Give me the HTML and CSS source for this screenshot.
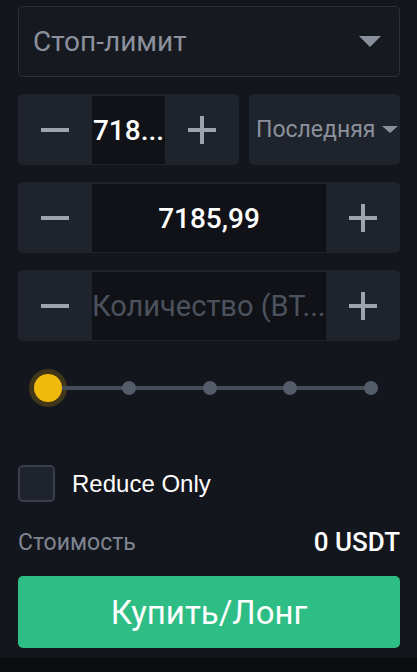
FILE: index.html
```html
<!DOCTYPE html>
<html lang="ru">
<head>
  <meta charset="UTF-8" />
  <meta name="viewport" content="width=device-width, initial-scale=1.0"/>
  <title>Стоп-лимит</title>
  <link rel="stylesheet" href="styles.css">
</head>
<body>
  <div class="panel">
    <div class="select">
      <span>Стоп-лимит</span>
      <span class="caret"></span>
    </div>

    <div class="row">
      <div class="stepper short">
        <button class="step minus"></button>
        <div class="field value">718...</div>
        <button class="step plus"></button>
      </div>
      <div class="trigger">
        <span>Последняя</span>
        <span class="caret small"></span>
      </div>
    </div>

    <div class="stepper">
      <button class="step minus"></button>
      <div class="field value">7185,99</div>
      <button class="step plus"></button>
    </div>

    <div class="stepper">
      <button class="step minus"></button>
      <div class="field placeholder">Количество (BT...</div>
      <button class="step plus"></button>
    </div>

    <div class="slider">
      <div class="stop first"><span class="knob"></span></div>
      <div class="track"></div>
      <div class="stop"><span class="dot"></span></div>
      <div class="track"></div>
      <div class="stop"><span class="dot"></span></div>
      <div class="track"></div>
      <div class="stop"><span class="dot"></span></div>
      <div class="track"></div>
      <div class="stop last"><span class="dot"></span></div>
    </div>

    <label class="check">
      <span class="box"></span>
      <span>Reduce Only</span>
    </label>

    <div class="cost">
      <span class="cost-label">Стоимость</span>
      <span class="cost-value">0 USDT</span>
    </div>

    <button class="buy">Купить/Лонг</button>
  </div>
  <div class="bottom"></div>
</body>
</html>
```

FILE: styles.css
```css
body {
  margin: 0;
  background: #14161d;
  font-family: Roboto, "Noto Sans", sans-serif;
  color: #fff;
}
.panel {
  padding: 6px 17px 10px 18px;
}
.select {
  height: 71px;
  box-sizing: border-box;
  border: 1px solid #2c3039;
  border-radius: 5px;
  background: #161920;
  display: flex;
  align-items: center;
  justify-content: space-between;
  padding: 0 18px 0 14px;
  color: #8b919c;
  font-size: 28px;
}
.caret {
  width: 0;
  height: 0;
  border-left: 11px solid transparent;
  border-right: 11px solid transparent;
  border-top: 11px solid #8b919c;
}
.caret.small {
  border-left-width: 8px;
  border-right-width: 8px;
  border-top-width: 7px;
}
.row {
  display: flex;
  gap: 10px;
  margin-top: 17px;
}
.stepper {
  height: 71px;
  display: flex;
  background: #1f232c;
  border-radius: 5px;
  padding: 2px 0 1px;
  box-sizing: border-box;
  margin-top: 17px;
}
.row .stepper {
  margin-top: 0;
}
.stepper.short {
  width: 221px;
}
.step {
  width: 74px;
  flex: none;
  border: none;
  background: transparent;
  position: relative;
  padding: 0;
}
.step::before, .plus::after {
  content: "";
  position: absolute;
  left: 50%;
  top: 50%;
  width: 28px;
  height: 4px;
  margin: -2px 0 0 -14px;
  background: #9ea3ac;
}
.plus::after {
  width: 4px;
  height: 28px;
  margin: -14px 0 0 -2px;
}
.field {
  flex: 1;
  min-width: 0;
  background: #101218;
  display: flex;
  align-items: center;
  justify-content: center;
  font-size: 28px;
  font-weight: 500;
  white-space: nowrap;
}
.placeholder {
  color: #4c525d;
  font-size: 29px;
  font-weight: 400;
  justify-content: flex-start;
}
.trigger {
  flex: 1;
  height: 71px;
  background: #1f232c;
  border-radius: 5px;
  display: flex;
  align-items: center;
  justify-content: space-between;
  padding: 0 2px 0 7px;
  color: #8b919c;
  font-size: 23px;
}
.slider {
  display: flex;
  align-items: center;
  height: 40px;
  margin: 27px 15px 0 16px;
}
.stop {
  width: 28px;
  height: 28px;
  display: flex;
  align-items: center;
  justify-content: center;
  background: linear-gradient(#474d58, #474d58) center / 100% 4px no-repeat;
}
.stop.first {
  background-position: right center;
  background-size: 50% 4px;
}
.stop.last {
  background-position: left center;
  background-size: 50% 4px;
}
.track {
  flex: 1;
  height: 4px;
  background: #474d58;
}
.dot {
  width: 14px;
  height: 14px;
  border-radius: 50%;
  background: #555c69;
}
.knob {
  width: 28px;
  height: 28px;
  border-radius: 50%;
  background: #f0b90b;
  box-shadow: 0 0 0 5px rgba(240, 185, 11, 0.2);
}
.check {
  display: flex;
  align-items: center;
  gap: 17px;
  margin-top: 57px;
  font-family: "Liberation Sans", Arial, sans-serif;
  font-size: 24px;
}
.box {
  width: 37px;
  height: 37px;
  box-sizing: border-box;
  border: 2px solid #393e49;
  border-radius: 5px;
  background: #1f232c;
}
.cost {
  display: flex;
  justify-content: space-between;
  align-items: center;
  height: 30px;
  margin-top: 25px;
}
.cost-label {
  color: #7f8591;
  font-size: 23px;
}
.cost-value {
  font-size: 26px;
  font-weight: 500;
}
.buy {
  display: block;
  width: 100%;
  height: 72px;
  margin-top: 19px;
  border: none;
  border-radius: 5px;
  background: #2ebd85;
  color: #fff;
  font-family: Roboto, "Noto Sans", sans-serif;
  font-size: 33px;
}
.bottom {
  height: 14px;
  background: #0b0d11;
}
```
